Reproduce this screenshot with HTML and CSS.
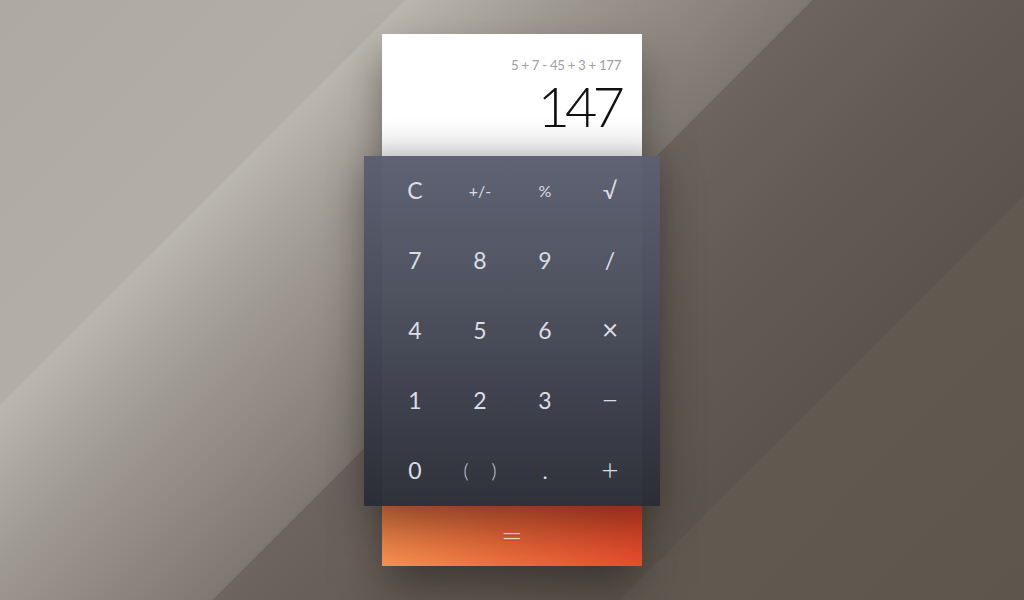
FILE: index.html
```html
<!DOCTYPE html>
<html lang="en">
<head>
<meta charset="utf-8">
<title>Calculator</title>
<link rel="stylesheet" href="styles.css">
</head>
<body>
<div class="scene">
  <div class="calc">
    <div class="display">
      <div class="expr">5 + 7 - 45 + 3 + 177</div>
      <div class="result">147</div>
    </div>
    <div class="pad">
      <div class="pad-center"></div>
      <div class="keys">
        <div class="key">C</div>
        <div class="key small">+/-</div>
        <div class="key small">%</div>
        <div class="key">√</div>
        <div class="key">7</div>
        <div class="key">8</div>
        <div class="key">9</div>
        <div class="key">/</div>
        <div class="key">4</div>
        <div class="key">5</div>
        <div class="key">6</div>
        <div class="key op">×</div>
        <div class="key">1</div>
        <div class="key">2</div>
        <div class="key">3</div>
        <div class="key op thin">−</div>
        <div class="key">0</div>
        <div class="key parens"><span>(</span><span>)</span></div>
        <div class="key dot">.</div>
        <div class="key op thin">+</div>
      </div>
    </div>
    <div class="equals"><span class="eq-sign">=</span></div>
  </div>
</div>
</body>
</html>
```

FILE: styles.css
```css
html, body {
  margin: 0;
  padding: 0;
  height: 100%;
}

body {
  font-family: Lato, "Open Sans", "Liberation Sans", sans-serif;
  overflow: hidden;
  background:
    linear-gradient(135deg,
      #aeaaa3 0px,
      #b2aea7 286px,
      #bab7af 287px,
      #9e9991 400px,
      #7e7871 574px,
      #6d645e 575px,
      #645b54 700px,
      #5c544c 862px,
      #615950 863px,
      #5e564d 100%);
}

.scene {
  height: 600px;
  display: flex;
  justify-content: center;
  align-items: flex-start;
  padding-top: 34px;
  box-sizing: border-box;
}

.calc {
  width: 260px;
  display: flex;
  flex-direction: column;
  box-shadow: 0 22px 40px -4px rgba(25, 20, 16, 0.5);
}

.display {
  height: 122px;
  background: linear-gradient(to bottom, #ffffff 0, #ffffff 84px, #f5f5f5 108px, #e4e4e4 122px);
  display: flex;
  flex-direction: column;
  align-items: flex-end;
  padding: 22px 21px 0 0;
  box-sizing: border-box;
}

.expr {
  font-size: 13.3px;
  color: #a0a0a0;
  line-height: 18px;
  letter-spacing: -0.35px;
}

.result {
  font-size: 56px;
  font-weight: 300;
  color: #111111;
  line-height: 56px;
  margin-top: 4px;
  margin-right: 1px;
  letter-spacing: -5px;
}

.pad {
  position: relative;
  height: 350px;
  margin: 0 -18px;
  background: linear-gradient(to bottom, #5c6071 0%, #4b4e5c 40%, #383b46 75%, #2b2e36 100%);
  box-shadow: 0 10px 40px rgba(20, 18, 16, 0.35);
  z-index: 1;
}

.pad-center {
  position: absolute;
  top: 0;
  bottom: 0;
  left: 18px;
  right: 18px;
  background: rgba(255, 255, 255, 0.025);
}

.keys {
  position: relative;
  padding: 0 18px;
  display: grid;
  grid-template-columns: repeat(4, 65px);
  grid-template-rows: repeat(5, 70px);
}

.key {
  display: flex;
  align-items: center;
  justify-content: center;
  color: #dcdde3;
  font-size: 23px;
  font-weight: 400;
  padding-left: 1px;
  padding-bottom: 2px;
}

.key.small {
  font-size: 16px;
}

.key.op {
  font-size: 28px;
  padding-bottom: 4px;
}

.key.op.thin {
  font-size: 30px;
  font-weight: 300;
}

.key.parens {
  gap: 23px;
  font-size: 19px;
  font-weight: 300;
}

.key.dot {
  font-size: 22px;
}

.equals {
  height: 60px;
  position: relative;
  background:
    linear-gradient(to bottom, rgba(60, 10, 0, 0.26) 0%, rgba(60, 10, 0, 0) 100%),
    linear-gradient(60deg, #f89150 0%, #ec6c3c 45%, #e4462a 100%);
  display: flex;
  align-items: center;
  justify-content: center;
}

.eq-sign {
  color: #e8e2de;
  font-size: 34px;
  font-weight: 300;
  line-height: 34px;
  margin-top: -4px;
  transform: scaleX(1.15);
  text-shadow: 0 1px 1px rgba(80, 20, 0, 0.35);
}
```
